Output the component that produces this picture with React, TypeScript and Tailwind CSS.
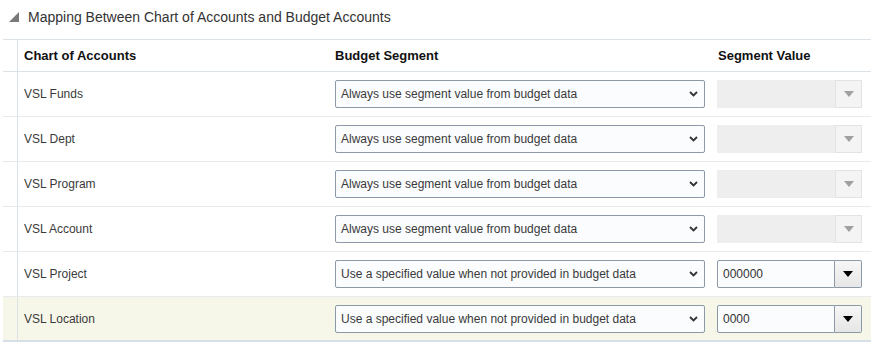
import React from 'react';

interface MappingRow {
  account: string;
  rule: string;
  value: string | null;
}

const rows: MappingRow[] = [
  { account: 'VSL Funds', rule: 'Always use segment value from budget data', value: null },
  { account: 'VSL Dept', rule: 'Always use segment value from budget data', value: null },
  { account: 'VSL Program', rule: 'Always use segment value from budget data', value: null },
  { account: 'VSL Account', rule: 'Always use segment value from budget data', value: null },
  { account: 'VSL Project', rule: 'Use a specified value when not provided in budget data', value: '000000' },
  { account: 'VSL Location', rule: 'Use a specified value when not provided in budget data', value: '0000' },
];

const ChevronDown = () => (
  <svg width="9" height="6" viewBox="0 0 9 6">
    <path d="M1 1 L4.5 4.5 L8 1" fill="none" stroke="#333" strokeWidth="1.8" />
  </svg>
);

const SegmentValue = ({ value }: { value: string | null }) => {
  if (value === null) {
    // disabled combo
    return (
      <div className="flex h-[28px] w-[145px] bg-[#eeeeee]">
        <div className="flex-1" />
        <div className="flex w-[27px] items-center justify-center border border-[#e3e3e3] bg-[#f4f4f4]">
          <span className="h-0 w-0 border-x-[5px] border-t-[6px] border-x-transparent border-t-[#a0a0a0]" />
        </div>
      </div>
    );
  }
  return (
    <div className="flex h-[28px] w-[145px]">
      <div className="flex flex-1 items-center rounded-l-[2px] border border-[#8c9aa8] bg-[#fbfcfe] pl-[5px] text-[12px] text-[#333]">
        {value}
      </div>
      <div className="flex w-[27px] items-center justify-center rounded-r-[2px] border border-l-0 border-[#8c9aa8] bg-gradient-to-b from-[#f7f7f7] to-[#e6e6e6]">
        <span className="h-0 w-0 border-x-[5px] border-t-[6px] border-x-transparent border-t-black" />
      </div>
    </div>
  );
};

const App = () => {
  return (
    <div className="h-[358px] w-[871px] bg-white font-['Liberation_Sans',Arial,sans-serif]">
      {/* Section title */}
      <div className="flex h-[39px] items-center pb-[5px] pl-[9px]">
        <span className="mr-[9px] h-0 w-0 border-b-[10px] border-l-[10px] border-b-[#7a7a7a] border-l-transparent" />
        <h2 className="text-[14px] text-[#333]">Mapping Between Chart of Accounts and Budget Accounts</h2>
      </div>

      <div className="ml-[3px]">
        {/* Header */}
        <div className="grid h-[33px] grid-cols-[15px_309px_383px_161px] border-y border-[#dae1e7] text-[13px] font-bold text-[#111]">
          <div className="border-r border-[#dae1e7]" />
          <div className="flex items-center pl-[6px]">Chart of Accounts</div>
          <div className="flex items-center pl-[8px]">Budget Segment</div>
          <div className="flex items-center pl-[8px]">Segment Value</div>
        </div>

        {rows.map((row, i) => {
          const last = i === rows.length - 1;
          return (
            <div
              key={row.account}
              className={`grid h-[45px] grid-cols-[15px_309px_383px_161px] text-[12px] text-[#3a3a3a] ${
                last ? 'border-b-2 border-[#d6dee6] bg-[#f7f7e9]' : 'border-b border-[#e7ebee]'
              }`}
            >
              <div className="border-r border-[#dae1e7]" />
              <div className="flex items-center pl-[6px]">{row.account}</div>
              <div className="flex items-center pl-[8px]">
                <div className="flex h-[28px] w-[370px] items-center justify-between rounded-[2px] border border-[#8c9aa8] bg-[#fbfcfe] pl-[5px] pr-[6px]">
                  <span>{row.rule}</span>
                  <ChevronDown />
                </div>
              </div>
              <div className="flex items-center pl-[7px]">
                <SegmentValue value={row.value} />
              </div>
            </div>
          );
        })}
      </div>
    </div>
  );
};

export default App;
